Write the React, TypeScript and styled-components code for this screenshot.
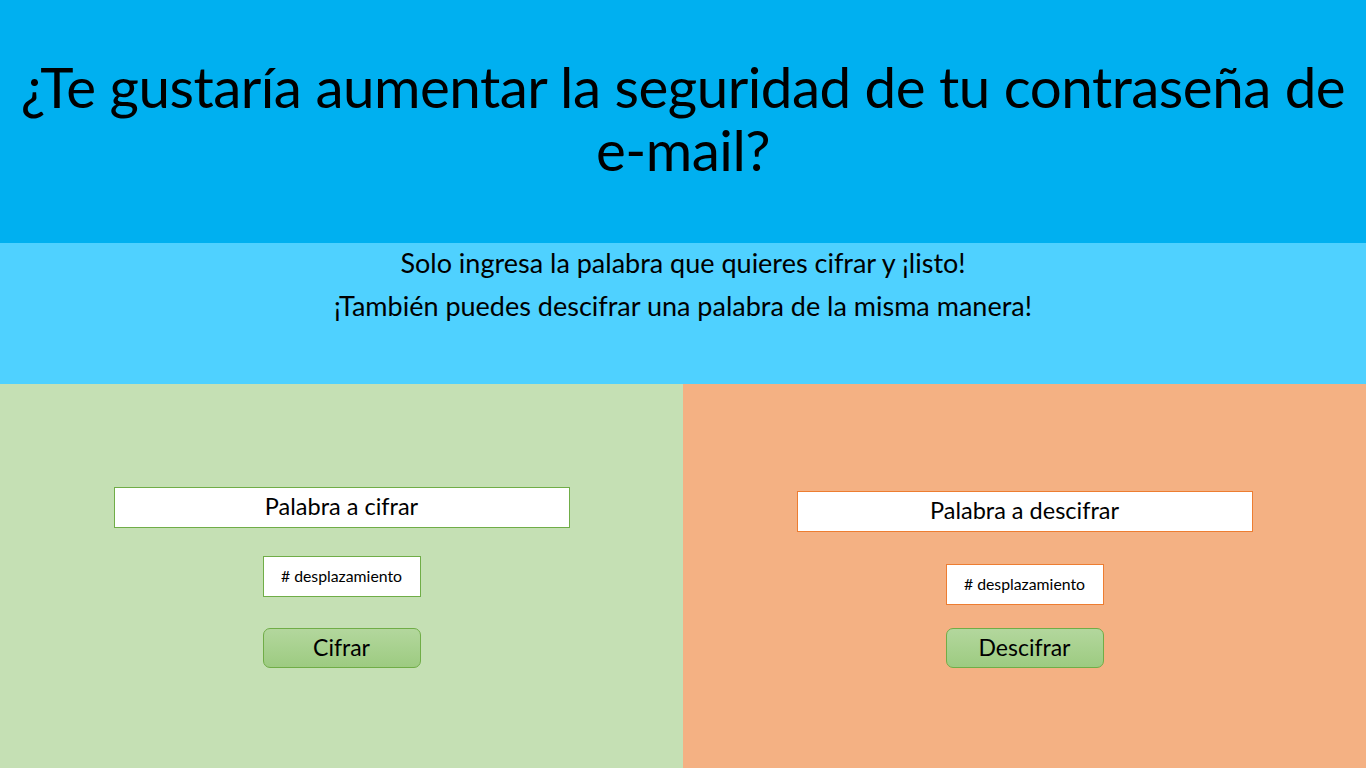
import React from "react";
import styled, { createGlobalStyle } from "styled-components";

const GlobalStyle = createGlobalStyle`
    html, body {
        margin: 0;
        padding: 0;
    }
    body {
        font-family: Lato, "Open Sans", sans-serif;
        color: #000;
    }
`;

const Page = styled.div`
    width: 1366px;
    height: 768px;
    display: flex;
    flex-direction: column;
    overflow: hidden;
`;

const Header = styled.header`
    height: 243px;
    box-sizing: border-box;
    background: #00b0f0;
    display: flex;
    align-items: center;
    justify-content: center;
    padding: 0 8px 8px;
`;

const Title = styled.h1`
    margin: 0;
    font-weight: 400;
    font-size: 56.5px;
    line-height: 63px;
    text-align: center;
    letter-spacing: -0.5px;
`;

const NoWrap = styled.span`
    white-space: nowrap;
`;

const Intro = styled.section`
    height: 141px;
    background: #4fd1ff;
    display: flex;
    flex-direction: column;
    align-items: center;
`;

const IntroLine = styled.p`
    margin: 0;
    font-size: 27px;
    line-height: 43px;
    &:first-child {
        margin-top: -2px;
    }
`;

const Split = styled.main`
    flex: 1;
    display: grid;
    grid-template-columns: 683px 683px;
`;

type Tone = "green" | "orange";

const tones = {
    green: { bg: "#c5e0b4", line: "#70ad47", top: 103 },
    orange: { bg: "#f4b183", line: "#ed7d31", top: 107 },
};

const Panel = styled.div<{ $tone: Tone }>`
    background: ${(p) => tones[p.$tone].bg};
    display: flex;
    flex-direction: column;
    align-items: center;
    padding-top: ${(p) => tones[p.$tone].top}px;
    box-sizing: border-box;
`;

const WordInput = styled.input<{ $tone: Tone }>`
    width: 456px;
    height: 41px;
    box-sizing: border-box;
    border: 1px solid ${(p) => tones[p.$tone].line};
    background: #fff;
    font-family: inherit;
    font-size: 23.5px;
    text-align: center;
    padding: 0 0 3px;
    outline: none;
    &::placeholder {
        color: #000;
        opacity: 1;
    }
`;

const ShiftInput = styled.input<{ $tone: Tone; $gap: number }>`
    margin-top: ${(p) => p.$gap}px;
    width: 158px;
    height: 41px;
    box-sizing: border-box;
    border: 1px solid ${(p) => tones[p.$tone].line};
    background: #fff;
    font-family: inherit;
    font-size: 15.8px;
    text-align: center;
    padding: 0 0 2px;
    outline: none;
    &::placeholder {
        color: #000;
        opacity: 1;
    }
`;

const ActionButton = styled.button<{ $gap: number }>`
    margin-top: ${(p) => p.$gap}px;
    width: 158px;
    height: 40px;
    box-sizing: border-box;
    border: 1px solid #70ad47;
    border-radius: 7px;
    background: linear-gradient(#b3d79d, #9dcb81);
    font-family: inherit;
    font-size: 23px;
    color: #000;
    padding: 0 0 2px;
    cursor: pointer;
`;

export default function App() {
    return (
        <>
            <GlobalStyle />
            <Page>
                <Header>
                    <Title>
                        ¿Te gustaría aumentar la seguridad de tu contraseña de <NoWrap>e-mail?</NoWrap>
                    </Title>
                </Header>
                <Intro>
                    <IntroLine>Solo ingresa la palabra que quieres cifrar y ¡listo!</IntroLine>
                    <IntroLine>¡También puedes descifrar una palabra de la misma manera!</IntroLine>
                </Intro>
                <Split>
                    <Panel $tone="green">
                        <WordInput $tone="green" placeholder="Palabra a cifrar" />
                        <ShiftInput $tone="green" $gap={28} placeholder="# desplazamiento" />
                        <ActionButton $gap={31}>Cifrar</ActionButton>
                    </Panel>
                    <Panel $tone="orange">
                        <WordInput $tone="orange" placeholder="Palabra a descifrar" />
                        <ShiftInput $tone="orange" $gap={32} placeholder="# desplazamiento" />
                        <ActionButton $gap={23}>Descifrar</ActionButton>
                    </Panel>
                </Split>
            </Page>
        </>
    );
}
